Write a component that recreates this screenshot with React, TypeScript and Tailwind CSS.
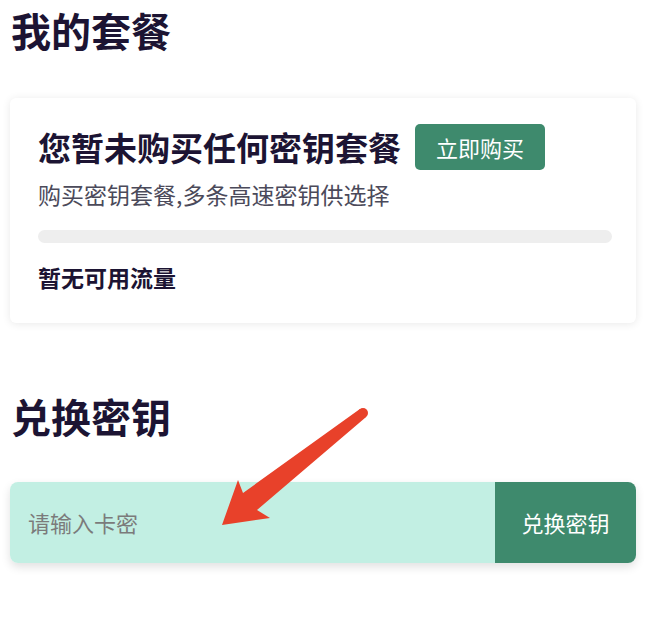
import React from 'react';

const font = { fontFamily: '"Noto Sans CJK SC", "Noto Sans", sans-serif' };

const App: React.FC = () => {
  return (
    <div className="relative w-[648px] h-[626px] bg-white pl-[10px] pr-[12px] pt-[10px] overflow-hidden" style={font}>
      {/* 我的套餐 */}
      <h1 className="text-[40px] leading-[40px] font-bold text-[#1c1433] pl-[1px]">我的套餐</h1>

      <div className="mt-[48px] bg-white rounded-[6px] shadow-[0_1px_8px_rgba(0,0,0,0.09)] pl-[28px] pr-[24px] pt-[26px] pb-[32px]">
        <div className="flex items-center gap-[14px]">
          <h2 className="text-[33px] leading-[36px] font-bold text-[#1c1433]">您暂未购买任何密钥套餐</h2>
          <button className="w-[130px] h-[46px] rounded-[5px] bg-[#3e8a6d] text-white text-[22px]">立即购买</button>
        </div>
        <p className="mt-[10px] text-[23px] leading-[28px] text-[#4b4a5a]">购买密钥套餐,多条高速密钥供选择</p>
        <div className="mt-[22px] h-[13px] rounded-full bg-[#eeeeee]" />
        <p className="mt-[20px] text-[23px] leading-[28px] font-bold text-[#1c1433]">暂无可用流量</p>
      </div>

      {/* 兑换密钥 */}
      <h1 className="mt-[73px] text-[40px] leading-[40px] font-bold text-[#1c1433] pl-[1px]">兑换密钥</h1>

      <div className="mt-[46px] flex h-[81px] rounded-[8px] overflow-hidden shadow-[0_4px_10px_rgba(0,0,0,0.12)]">
        <input
          className="flex-1 bg-[#c2efe3] pl-[18px] text-[22px] text-[#333] placeholder:text-[#7b7b7b] outline-none"
          placeholder="请输入卡密"
        />
        <button className="w-[141px] bg-[#3e8a6d] text-white text-[22px]">兑换密钥</button>
      </div>

      {/* annotation arrow */}
      <svg className="absolute left-0 top-0 pointer-events-none" width="648" height="626" viewBox="0 0 648 626">
        <polygon
          fill="#e8412a"
          points="359.9,409.1 243,493 238,480 222,525 270,518 257,510 366.1,416.9"
        />
        <circle cx="363" cy="413" r="5" fill="#e8412a" />
      </svg>
    </div>
  );
};

export default App;
